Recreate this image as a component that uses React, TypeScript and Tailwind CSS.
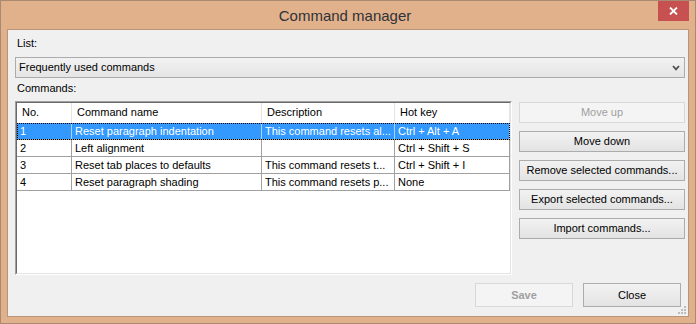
import React from 'react';
import clsx from 'clsx';

type Row = { no: string; name: string; desc: string; key: string; selected?: boolean };

const rows: Row[] = [
  { no: '1', name: 'Reset paragraph indentation', desc: 'This command resets al...', key: 'Ctrl + Alt + A', selected: true },
  { no: '2', name: 'Left alignment', desc: '', key: 'Ctrl + Shift + S' },
  { no: '3', name: 'Reset tab places to defaults', desc: 'This command resets t...', key: 'Ctrl + Shift + I' },
  { no: '4', name: 'Reset paragraph shading', desc: 'This command resets p...', key: 'None' },
];

const colWidths = ['w-[55px]', 'w-[190px]', 'w-[133px]', 'w-[115px]'];
const headers = ['No.', 'Command name', 'Description', 'Hot key'];

const SideButton: React.FC<{ label: string; disabled?: boolean }> = ({ label, disabled }) => (
  <button
    className={clsx(
      'h-[21px] w-full flex items-center justify-center border',
      disabled
        ? 'bg-[#f4f4f4] border-[#d9d9d9] text-[#a0a0a0]'
        : 'bg-linear-to-b from-[#f2f2f2] to-[#e3e3e3] border-[#acacac] text-black'
    )}
  >
    {label}
  </button>
);

const App: React.FC = () => {
  return (
    <div className="w-[696px] h-[324px] flex flex-col bg-[#e1b18c] border border-[#a88a72] font-['Liberation_Sans',Arial,sans-serif] text-[11px] leading-[13px] text-black overflow-hidden select-none">
      {/* title bar */}
      <div className="h-[28px] flex shrink-0">
        <div className="flex-1" />
        <div className="flex items-center pt-[1px] text-[15px] leading-[18px] text-[#303336]">Command manager</div>
        <div className="flex-1 flex justify-end pr-[6px]">
          <div className="w-[31px] h-[20px] bg-[#c75050] flex items-center justify-center">
            <svg width="9" height="8" viewBox="0 0 9 8">
              <path d="M1 0.5 L8 7.5 M8 0.5 L1 7.5" stroke="#fff" strokeWidth="1.8" />
            </svg>
          </div>
        </div>
      </div>

      {/* client area */}
      <div className="flex-1 px-[6px] pb-[6px] flex">
        <div className="flex-1 relative bg-[#f0f0f0] border border-[#b8947a] flex flex-col pl-[7px] pr-[3px]">
          <div className="h-[27px] pt-[7px] pl-[2px] shrink-0">List:</div>

          <div className="h-[21px] shrink-0 flex items-center justify-between border border-[#acacac] bg-linear-to-b from-[#f2f2f2] to-[#e5e5e5] pl-[3px] pr-[4px]">
            <span>Frequently used commands</span>
            <svg width="8" height="6" viewBox="0 0 8 6">
              <path d="M1 1 L4 4.3 L7 1" fill="none" stroke="#505050" strokeWidth="1.8" />
            </svg>
          </div>

          <div className="h-[23px] pt-[4px] pl-[2px] shrink-0">Commands:</div>

          <div className="h-[174px] shrink-0 flex gap-[7px]">
            {/* list view */}
            <div className="w-[497px] border-t border-l border-t-[#a0a0a0] border-l-[#a0a0a0] border-r border-b border-r-white border-b-white">
              <div className="h-full border-t border-l border-t-[#696969] border-l-[#696969] border-r border-b border-r-[#e3e3e3] border-b-[#e3e3e3] bg-white">
                <div className="flex h-[20px]">
                  {headers.map((h, i) => (
                    <div key={h} className={clsx(colWidths[i], 'shrink-0 flex items-center pl-[5px] pb-[1px] border-r border-[#e5e5e5]')}>
                      {h}
                    </div>
                  ))}
                </div>
                {rows.map((r) => (
                  <div
                    key={r.no}
                    className={clsx(
                      'flex h-[17px]',
                      r.selected && 'bg-[#3399ff] text-white outline-1 outline-dotted outline-black -outline-offset-1'
                    )}
                  >
                    {[r.no, r.name, r.desc, r.key].map((c, i) => (
                      <div
                        key={i}
                        className={clsx(
                          colWidths[i],
                          'shrink-0 flex items-center pl-[3px] border-b border-b-[#a0a0a0] border-r overflow-hidden whitespace-nowrap',
                          r.selected ? 'border-r-[#a9d1fb]' : 'border-r-[#a0a0a0]'
                        )}
                      >
                        {c}
                      </div>
                    ))}
                  </div>
                ))}
              </div>
            </div>

            {/* side buttons */}
            <div className="flex-1 flex flex-col gap-[8px] pt-[1px]">
              <SideButton label="Move up" disabled />
              <SideButton label="Move down" />
              <SideButton label="Remove selected commands..." />
              <SideButton label="Export selected commands..." />
              <SideButton label="Import commands..." />
            </div>
          </div>

          {/* bottom buttons */}
          <div className="flex justify-end gap-[10px] pt-[8px] pr-[4px]">
            <button className="w-[98px] h-[24px] flex items-center justify-center border border-[#d9d9d9] bg-[#f4f4f4] text-[#a0a0a0] font-bold">
              Save
            </button>
            <button className="w-[98px] h-[24px] flex items-center justify-center border border-[#acacac] bg-linear-to-b from-[#f2f2f2] to-[#e3e3e3] text-black">
              Close
            </button>
          </div>

          {/* size grip */}
          <svg className="absolute right-[2px] bottom-[2px]" width="8" height="8" viewBox="0 0 8 8">
            <rect x="6" y="0" width="2" height="2" fill="#bcbcbc" />
            <rect x="3" y="3" width="2" height="2" fill="#bcbcbc" />
            <rect x="6" y="3" width="2" height="2" fill="#bcbcbc" />
            <rect x="0" y="6" width="2" height="2" fill="#bcbcbc" />
            <rect x="3" y="6" width="2" height="2" fill="#bcbcbc" />
            <rect x="6" y="6" width="2" height="2" fill="#bcbcbc" />
          </svg>
        </div>
      </div>
    </div>
  );
};

export default App;
